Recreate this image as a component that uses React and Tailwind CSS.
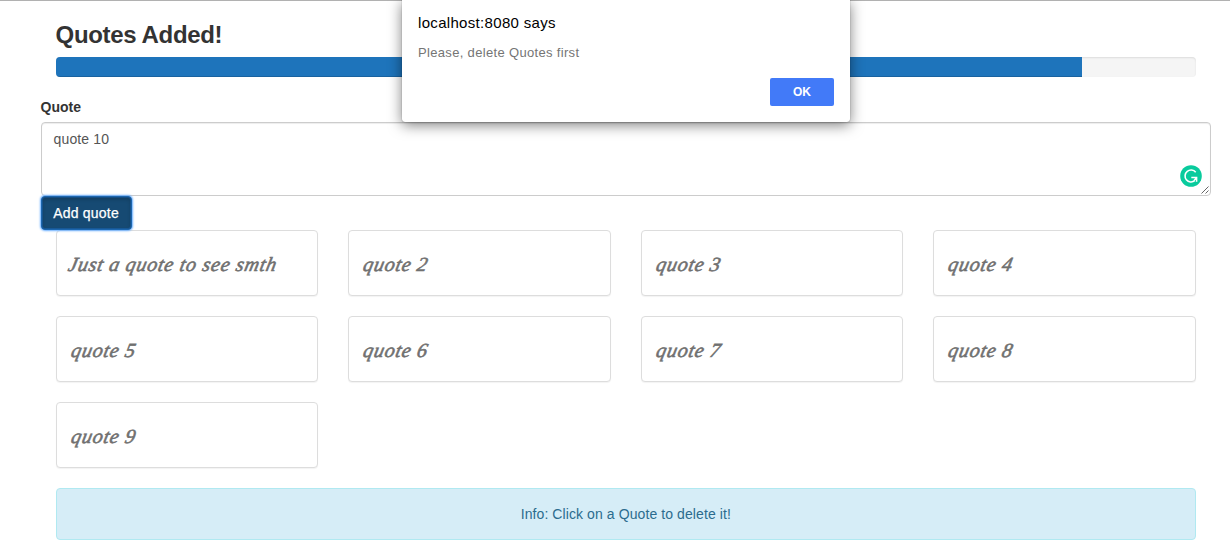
const quotes = [
  'Just a quote to see smth',
  'quote 2',
  'quote 3',
  'quote 4',
  'quote 5',
  'quote 6',
  'quote 7',
  'quote 8',
  'quote 9',
];

function Progress({ value, max }) {
  return (
    <div className="h-5 overflow-hidden rounded bg-[#f5f5f5] shadow-[inset_0_1px_2px_rgba(0,0,0,0.1)]">
      <div
        className="h-full bg-[#1e74bb] shadow-[inset_0_-1px_0_rgba(0,0,0,0.15)]"
        style={{ width: `${(value / max) * 100}%` }}
      />
    </div>
  );
}

function QuoteForm() {
  return (
    <div className="mt-5">
      <label htmlFor="quote" className="mb-[5px] block font-bold text-[#333]">
        Quote
      </label>
      <div className="relative h-[74px]">
        <textarea
          id="quote"
          defaultValue="quote 10"
          className="block h-[74px] w-full resize-none rounded border border-[#ccc] bg-white px-3 py-1.5 tracking-[0.12px] text-[#555] shadow-[inset_0_1px_1px_rgba(0,0,0,0.075)] outline-none"
        />
        <svg className="absolute top-[43px] right-[9.4px] size-[22px]" viewBox="0 0 22 22" fill="none">
          <circle cx="11" cy="11" r="10.8" fill="#09cb9d" />
          <path d="M15.7 7.2A6 6 0 1 0 14.8 15.7" stroke="#fff" strokeWidth="1.6" />
          <path d="M11.3 12.4H16.6V16.8M16.4 12.6L14 15.6" stroke="#fff" strokeWidth="1.5" />
        </svg>
        <svg className="absolute right-0.5 bottom-0.5 size-2" viewBox="0 0 8 8" stroke="#555" strokeWidth="0.9">
          <path d="M0.5 7.5L7.5 0.5M4.5 7.5L7.5 4.5" />
        </svg>
      </div>
      <button className="relative block h-[34px] w-[91px] rounded border border-[#1c66ae] bg-[#164a73] text-center leading-8 tracking-[0.2px] text-white shadow-[0_0_2px_1px_#6bafff,inset_0_2px_4px_rgba(0,0,0,0.2),inset_0_0_0_1px_#185b9a] [-webkit-text-stroke:0.25px_white]">
        Add quote
      </button>
    </div>
  );
}

function QuoteCard({ text }) {
  const long = text.length > 10;
  return (
    <div
      className={`flex h-[66px] items-center rounded border border-[#ddd] bg-white shadow-[0_1px_1px_rgba(0,0,0,0.05)] ${long ? 'pl-3' : 'pl-[15px]'}`}
    >
      <span
        className={`-skew-x-12 pt-0.5 font-['Liberation_Serif',serif] text-[20px] leading-none whitespace-nowrap text-[#707070] italic [-webkit-text-stroke:0.6px_#707070] ${long ? 'tracking-[0.75px]' : 'tracking-[0.7px]'}`}
      >
        {text}
      </span>
    </div>
  );
}

function AlertDialog() {
  return (
    <div
      role="alertdialog"
      className="absolute -top-px left-[402px] flex h-[122px] w-[448px] flex-col rounded-b-[3px] bg-white px-4 pt-3.5 shadow-[0_0_1px_rgba(0,0,0,0.6),0_3px_14px_rgba(0,0,0,0.5)]"
    >
      <div className="text-[15px] leading-[18px] tracking-[0.32px] text-black">localhost:8080 says</div>
      <div className="mt-[13px] text-[13px] leading-4 tracking-[0.33px] text-[#757575]">Please, delete Quotes first</div>
      <button className="mt-[17px] h-7 w-16 self-end rounded-xs bg-[#427af8] text-xs font-bold text-white">OK</button>
    </div>
  );
}

export default function App() {
  return (
    <div className="relative h-[560px] border-t border-[#b1b1b1] bg-white pt-5 pr-[19px] pl-[40.6px] font-['Liberation_Sans',Arial,sans-serif] text-sm leading-5 text-[#333]">
      <div className="px-[15px]">
        <h3 className="mb-2.5 pt-px text-2xl leading-[25px] font-bold tracking-[-0.35px]">Quotes Added!</h3>
        <Progress value={9} max={10} />
      </div>
      <QuoteForm />
      <div className="grid grid-cols-4 gap-x-[30px] gap-y-5 px-[15px]">
        {quotes.map((q) => (
          <QuoteCard key={q} text={q} />
        ))}
      </div>
      <div className="mt-5 px-[15px]">
        <div className="flex h-[52px] items-center justify-center rounded border border-[#b0e9f1] bg-[#d6edf7] tracking-[0.09px] text-[#2b6c8e]">
          Info: Click on a Quote to delete it!
        </div>
      </div>
      <AlertDialog />
    </div>
  );
}
